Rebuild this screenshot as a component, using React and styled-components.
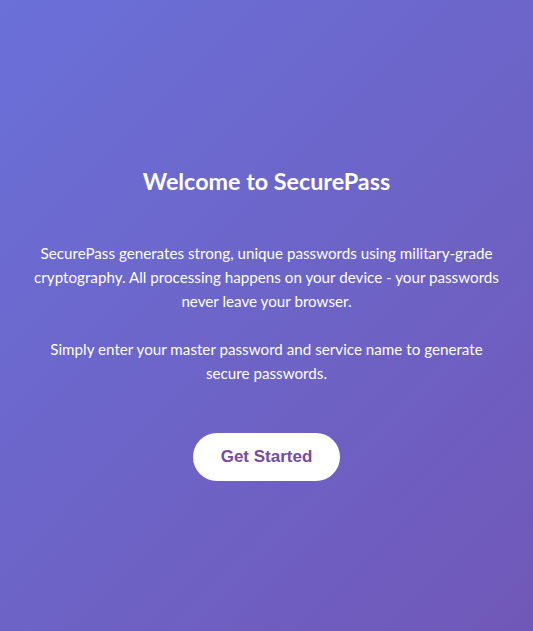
import React from 'react'
import styled, { createGlobalStyle } from 'styled-components'

const GlobalStyle = createGlobalStyle`
  html, body {
    margin: 0;
    padding: 0;
  }
  body {
    font-family: Lato, "Noto Sans", sans-serif;
  }
`;

const Page = styled.div`
  min-height: 100vh;
  box-sizing: border-box;
  background: linear-gradient(135deg, #6a70d8 0%, #7058b8 100%);
  display: flex;
  flex-direction: column;
  justify-content: center;
  align-items: center;
  padding: 18px 28px 0;
  color: #ffffff;
  text-align: center;
`;

const Title = styled.h1`
  font-size: 23.3px;
  font-weight: 700;
  line-height: 26px;
  margin: 0 0 47px;
`;

const Text = styled.p`
  font-size: 15.2px;
  line-height: 24px;
  margin: 0 0 ${p => p.$last ? 48 : 24}px;
`;

const Button = styled.button`
  font-family: "Liberation Sans", Arial, sans-serif;
  font-size: 17px;
  font-weight: 700;
  color: #764ba2;
  background: #ffffff;
  border: none;
  border-radius: 25px;
  width: 147px;
  height: 48px;
  cursor: pointer;
`;

const App = () => {
  return (
    <Page>
      <GlobalStyle />
      <Title>Welcome to SecurePass</Title>
      <Text>
        SecurePass generates strong, unique passwords using military-grade cryptography. All processing happens on your device - your passwords never leave your browser.
      </Text>
      <Text $last>
        Simply enter your master password and service name to generate secure passwords.
      </Text>
      <Button>Get Started</Button>
    </Page>
  )
}

export default App
